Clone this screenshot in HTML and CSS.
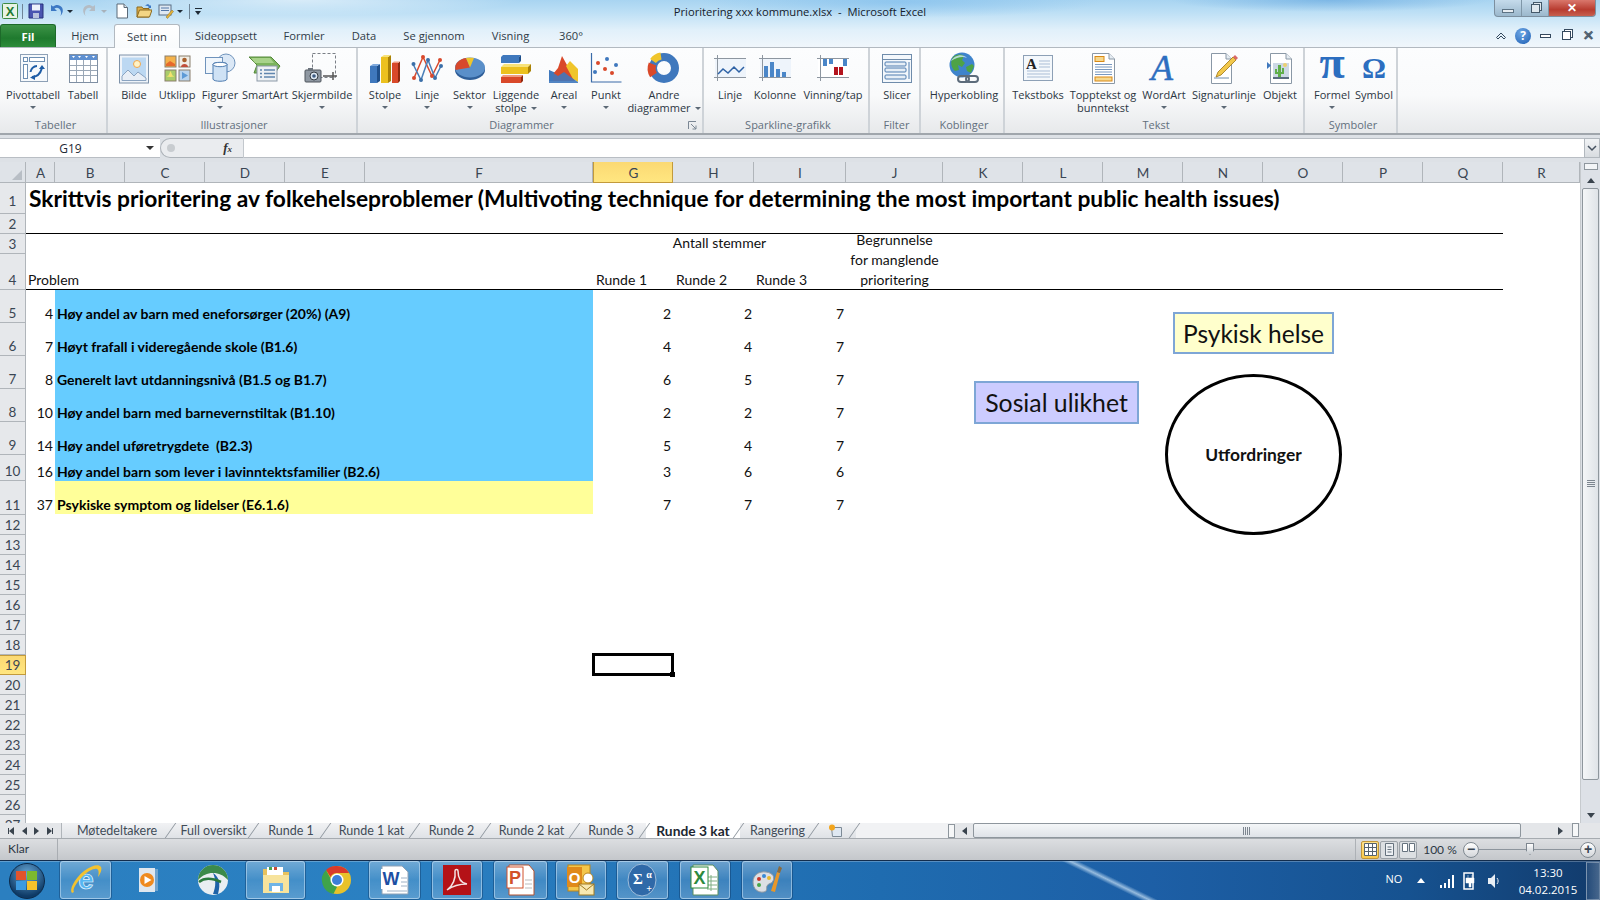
FILE: index.html
```html
<!DOCTYPE html>
<html lang="no">
<head>
<meta charset="utf-8">
<title>Prioritering xxx kommune.xlsx - Microsoft Excel</title>
<link rel="stylesheet" href="styles.css">
</head>
<body>
<div class="app">
<header class="chrome">
  <div class="titlebar">
    <div class="qat">
      <svg class="q w16" viewBox="0 0 16 16"><rect x=".5" y=".5" width="15" height="15" rx="1" fill="#e8f3e4" stroke="#3d8a45"/><text x="8" y="13" class="xl">X</text></svg>
      <span class="qsep"></span>
      <svg class="q w16 s1" viewBox="0 0 16 16"><path d="M1 1h14v14H1z" fill="#4a55b0" stroke="#27307a"/><rect x="4" y="1.500" width="8" height="6" fill="#eef2fb"/><rect x="5" y="10" width="6" height="5" fill="#b9c3dd"/></svg>
      <svg class="q w16 s2" viewBox="0 0 16 16"><path d="M3 2v6h6L6.500 5.500C9 4 12 5 13 9c.3 1.500 0 3-1 4 3-2 3.500-6 2-8.500C12 1.500 8 1 5 3.500z" fill="#3c78c4"/></svg>
      <i class="qa s3"></i>
      <svg class="q w16 s4" viewBox="0 0 16 16"><path d="M13 2v6H7l2.500-2.500C7 4 4 5 3 9c-.3 1.500 0 3 1 4-3-2-3.500-6-2-8.500C4 1.500 8 1 11 3.500z" fill="#b4bcc4"/></svg>
      <i class="qa s5 dim"></i>
      <svg class="q w16 s6" viewBox="0 0 16 16"><path d="M3 1h7l3.500 3.500V15H3z" fill="#fff" stroke="#5b6a78"/><path d="M10 1v3.500h3.500" fill="#dfe6ec" stroke="#5b6a78"/></svg>
      <svg class="q w16 s7" viewBox="0 0 16 16"><path d="M1 4h5l1 1.500h6V14H1z" fill="#dcae4b" stroke="#8d6a1f"/><path d="M3.500 7H16l-2.500 7H1z" fill="#f4d684" stroke="#8d6a1f"/><path d="M9 3c2-2.500 4-2 5 0l1-1v3h-3l1-1c-1-1-2.500-1.500-4-1z" fill="#3c78c4"/></svg>
      <svg class="q w16 s8" viewBox="0 0 16 16"><rect x="1" y="2" width="12" height="10" fill="#dfe8f2" stroke="#596d84"/><path d="M3 5h8M3 7.500h8" stroke="#5276a8"/><path d="M8 14l6-7 1.500 1.500-6 7z" fill="#e5b43a" stroke="#8d6a1f" stroke-width=".5"/></svg>
      <i class="qa s9"></i>
      <span class="qsep s10"></span>
      <span class="qc"></span>
    </div>
    <div class="doctitle">Prioritering xxx kommune.xlsx&nbsp; -&nbsp; Microsoft Excel</div>
    <div class="wctrl">
      <span class="wb"><i class="wmin"></i></span>
      <span class="wb"><i class="wres"></i></span>
      <span class="wb close"><b>✕</b></span>
    </div>
  </div>
  <nav class="tabs">
    <span class="tab fil">Fil</span>
    <span class="tab t58">Hjem</span>
    <span class="tab active">Sett inn</span>
    <span class="tab t92">Sideoppsett</span>
    <span class="tab t64">Formler</span>
    <span class="tab t56">Data</span>
    <span class="tab t84">Se gjennom</span>
    <span class="tab t69">Visning</span>
    <span class="tab t52">360°</span>
    <div class="helpbar">
      <svg class="hb1" width="12" height="10" viewBox="0 0 12 10"><path d="M1.500 6.500L6 2l4.500 4.500L9 8 6 5 3 8z" fill="none" stroke="#34495e"/></svg>
      <span class="help">?</span>
      <i class="hmin"></i>
      <i class="hres"></i>
      <b class="hx">✕</b>
    </div>
  </nav>
</header>

<section class="ribbon">
  <div class="group g108 pad5">
    <div class="btns">
      <div class="rb w56"><svg viewBox="0 0 32 32"><rect x="3.500" y="2.500" width="27" height="27" fill="#f6f9fc" stroke="#8da0b6"/><rect x="6.500" y="5.500" width="4" height="4" fill="#fff" stroke="#6e8fb3"/><rect x="12.500" y="5.500" width="15" height="4" fill="#fff" stroke="#6e8fb3"/><rect x="6.500" y="12.500" width="4" height="14" fill="#fff" stroke="#6e8fb3"/><path d="M15 25c4 0 8-2 10-9M13.500 20c.3-3 3-6 6.500-6" fill="none" stroke="#1d5ca6" stroke-width="2"/><path d="M22 17l3-4 3 4zM18 23v5l-5-2.500z" fill="#1d5ca6"/></svg><span>Pivottabell</span><i class="dd"></i></div>
      <div class="rb w44"><svg viewBox="0 0 32 32"><rect x="2.500" y="2.500" width="28" height="28" fill="#fff" stroke="#7f8fa3"/><rect x="3" y="3" width="27" height="5" fill="#5d8fd1"/><path d="M9.500 8v22M16.500 8v22M23.500 8v22M3 13.500h27M3 18.500h27M3 23.500h27" stroke="#9aa7b6"/><path d="M5 4l1.500 2L8 4zM11 4l1.500 2L14 4zM18 4l1.500 2L21 4zM25 4l1.500 2L28 4z" fill="#fff"/></svg><span>Tabell</span></div>
    </div>
    <div class="glabel">Tabeller</div>
  </div>
  <div class="group g250">
    <div class="btns">
      <div class="rb w44"><svg viewBox="0 0 32 32"><rect x="1.500" y="3" width="29" height="28" fill="#eef3f9" stroke="#7e92a9"/><rect x="4" y="5.500" width="24" height="23" fill="#bcd8f2"/><circle cx="19" cy="12" r="3.500" fill="#fff2c4" stroke="#efa64c"/><path d="M4 28.500V24l6-6 6 6 4-4 8 6v2.500z" fill="#e8eef6" stroke="#8aa3c0"/></svg><span>Bilde</span></div>
      <div class="rb w42"><svg viewBox="0 0 32 32"><rect x="4" y="4" width="11" height="11" fill="#f4b24b" stroke="#8a7f6c"/><path d="M5 12l4-3 5 3v2H5z" fill="#e66a2c"/><rect x="18" y="4" width="11" height="11" fill="#f1eee6" stroke="#8a7f6c"/><circle cx="23.500" cy="8" r="2.300" fill="#a8602c"/><path d="M20 15c0-4 7-4 7 0z" fill="#c04e3a"/><rect x="4" y="18" width="11" height="11" fill="#a9cc6b" stroke="#8a7f6c"/><path d="M9.500 19l2 4.500 2 1-4 .5-4-.5 2-1z" fill="#f4e36c"/><rect x="18" y="18" width="11" height="11" fill="#b9d4ee" stroke="#8a7f6c"/><path d="M21 20l6 3.500-6 3.500z" fill="#5d9ad6"/></svg><span>Utklipp</span></div>
      <div class="rb w44"><svg viewBox="0 0 32 32"><circle cx="22" cy="11" r="9" fill="#dbe8f6" stroke="#6f93bc"/><rect x="1.500" y="5.500" width="17" height="16" fill="#f0f6fc" stroke="#6f93bc"/><path d="M9 12c0-2 14-2 14 0v15c0 3-14 3-14 0z" fill="#cfe2f5" stroke="#4f7cb0"/><ellipse cx="16" cy="12.500" rx="7" ry="2.200" fill="#fff" stroke="#4f7cb0"/></svg><span>Figurer</span><i class="dd"></i></div>
      <div class="rb w46"><svg viewBox="0 0 32 32"><path d="M0 5h22l9 9-5 7H5l3-8z" fill="#7cb45c" stroke="#54883a"/><path d="M2 6h19l4 5H6z" fill="#a8d38a"/><rect x="8" y="14" width="20" height="15" fill="#eef1f4" stroke="#8b99a7"/><path d="M11 18h2M15 18h11M11 21.500h2M15 21.500h11M11 25h2M15 25h11" stroke="#6186ae" stroke-width="1.300"/></svg><span>SmartArt</span></div>
      <div class="rb w68"><svg viewBox="0 0 36 32" class="w36i"><rect x="8.500" y="1.500" width="23" height="24" fill="none" stroke="#7a7f86" stroke-dasharray="3 2"/><rect x="1" y="18" width="16" height="12" rx="1" fill="#8f98a2" stroke="#4e555c"/><rect x="4" y="16" width="5" height="3" fill="#6b737c"/><circle cx="10" cy="24" r="4" fill="#dbe7f2" stroke="#353b42"/><circle cx="10" cy="24" r="1.800" fill="#3d5a80"/><path d="M19 24h9M29 20v8M25 24h8" stroke="#555" stroke-width="1.500"/></svg><span>Skjermbilde</span><i class="dd"></i></div>
    </div>
    <div class="glabel">Illustrasjoner</div>
  </div>
  <div class="group g346 pad5">
    <div class="btns">
      <div class="rb w44"><svg viewBox="0 0 32 32"><path d="M1 14h7v17H1z" fill="#3f78bd"/><path d="M8 14l3-2v17l-3 2z" fill="#1f4f8a"/><path d="M1 14l3-2h7l-3 2z" fill="#7fa9dc"/><path d="M12 5h7v26h-7z" fill="#ecc11f"/><path d="M19 5l3-2v26l-3 2z" fill="#a98207"/><path d="M12 5l3-2h7l-3 2z" fill="#f8e27a"/><path d="M23 11h6v20h-6z" fill="#d9492a"/><path d="M29 11l2-1.500V29l-2 2z" fill="#91290f"/><path d="M23 11l2-1.500h6L29 11z" fill="#f09b80"/></svg><span>Stolpe</span><i class="dd"></i></div>
      <div class="rb w40"><svg viewBox="0 0 32 32"><path d="M3 26l9-21 9 19 8-16" fill="none" stroke="#d8492c" stroke-width="1.500"/><path d="M2 12l8 16 7-20 7 18 6-12" fill="none" stroke="#4a7fb8" stroke-width="1.500"/><g fill="#d8492c"><circle cx="3" cy="26" r="2"/><circle cx="12" cy="5" r="2"/><circle cx="21" cy="24" r="2"/><circle cx="29" cy="8" r="2"/></g><g fill="#3b6fa8"><circle cx="2.500" cy="12" r="2"/><circle cx="10" cy="28" r="2"/><circle cx="17" cy="8" r="2"/><circle cx="24" cy="26" r="2"/><circle cx="30" cy="14" r="2"/></g></svg><span>Linje</span><i class="dd"></i></div>
      <div class="rb w45"><svg viewBox="0 0 32 32"><ellipse cx="16" cy="18" rx="15" ry="10" fill="#2f5f99"/><ellipse cx="16" cy="15.500" rx="15" ry="10" fill="#5a8fc9"/><path d="M16 15.500L1.500 18C0 12 5 7 12 6z" fill="#d8492c"/><path d="M16 15.500L12 6c2-.500 6-.500 8 0z" fill="#f0c52b"/></svg><span>Sektor</span><i class="dd"></i></div>
      <div class="rb w48"><svg viewBox="0 0 32 32"><path d="M1 5h18l-2 2H1zM3 3h18l-2 2H1z" fill="#3f78bd"/><path d="M1 5h18v6H1z" fill="#3f78bd"/><path d="M19 5l2-2v6l-2 2z" fill="#1f4f8a"/><path d="M1 15h27v7H1z" fill="#ecc11f"/><path d="M1 15l3-3h27l-3 3z" fill="#f8e27a"/><path d="M28 15l3-3v7l-3 3z" fill="#a98207"/><path d="M1 25h20v6H1z" fill="#d9492a"/><path d="M1 25l2-2h20l-2 2z" fill="#f09b80"/><path d="M21 25l2-2v6l-2 2z" fill="#91290f"/></svg><span>Liggende<br>stolpe<i class="dd inl"></i></span></div>
      <div class="rb w48"><svg viewBox="0 0 32 32"><path d="M1 18l7 3 4-6 6 9 8 5H1z" fill="#3f78bd"/><path d="M5 22l5-6 4-12 5 9 4 8 4 8H5z" fill="#d9492a"/><path d="M18 14l4-5 8 8v13l-5-3z" fill="#f0c52b"/><path d="M1 18l9 6 6-4 5 4 9 6v1H1z" fill="#3f78bd" opacity=".9"/></svg><span>Areal</span><i class="dd"></i></div>
      <div class="rb w36"><svg viewBox="0 0 32 32"><path d="M1.500 1v29h30" fill="none" stroke="#3a6ba8" stroke-width="1.200"/><g fill="#d9492a"><circle cx="8" cy="11" r="2"/><circle cx="15" cy="17" r="2"/><circle cx="22" cy="21" r="2"/></g><g fill="#3f78bd"><circle cx="5" cy="20" r="2"/><circle cx="17" cy="7" r="2"/><circle cx="26" cy="13" r="2"/></g></svg><span>Punkt</span><i class="dd"></i></div>
      <div class="rb w80"><svg viewBox="0 0 32 32"><circle cx="16" cy="16" r="11" fill="none" stroke="#3f78bd" stroke-width="8"/><path d="M5.500 23A12 12 0 0 1 4.500 12" fill="none" stroke="#d9492a" stroke-width="8"/><path d="M5 9A12 12 0 0 1 13 4" fill="none" stroke="#f0c52b" stroke-width="7"/></svg><span>Andre<br>diagrammer<i class="dd inl"></i></span></div>
    </div>
    <div class="glabel lnch">Diagrammer</div>
    <svg class="launch" width="9" height="9" viewBox="0 0 9 9"><path d="M.5 8V.5H8M3 3l5 5M4.500 8H8V4.500" fill="none" stroke="#7b8794"/></svg>
  </div>
  <div class="group g166">
    <div class="btns">
      <div class="rb w44"><svg viewBox="0 0 32 32"><rect x="1" y="6" width="31" height="20" fill="#eef4fb"/><path d="M0 6.500h32M0 25.500h32M3.500 3v26" stroke="#8d96a0"/><path d="M4 22l5-5 5 4 6-6 5 5 5-5" fill="none" stroke="#2e62a6" stroke-width="1.500"/></svg><span>Linje</span></div>
      <div class="rb w46"><svg viewBox="0 0 32 32"><rect x="1" y="6" width="31" height="20" fill="#eef4fb"/><path d="M0 6.500h32M0 25.500h32M3.500 3v26" stroke="#8d96a0"/><path d="M5 25V14h4v11zM11 25V10h4v15zM17 25V17h4v8zM23 25V20h4v5z" fill="#4a86c8"/></svg><span>Kolonne</span></div>
      <div class="rb w70"><svg viewBox="0 0 32 32"><rect x="1" y="6" width="31" height="20" fill="#fff"/><path d="M0 6.500h32M0 25.500h32M3.500 3v26" stroke="#8d96a0"/><path d="M6 7h4v7H6zM12 7h4v5h-4zM26 7h4v7h-4z" fill="#4a86c8"/><path d="M17 15h4v8h-4zM22 15h4v8h-4z" fill="#b4141e"/></svg><span>Vinning/tap</span></div>
    </div>
    <div class="glabel">Sparkline-grafikk</div>
  </div>
  <div class="group g51">
    <div class="btns">
      <div class="rb w46"><svg viewBox="0 0 32 32"><rect x="1.500" y="2.500" width="29" height="28" fill="#f4f8fc" stroke="#6f8cab"/><path d="M1.500 7.500h29" stroke="#6f8cab"/><g fill="#e6eef6" stroke="#4f7cb0"><rect x="4" y="10" width="21" height="4" rx="1"/><rect x="4" y="16" width="21" height="4" rx="1"/><rect x="4" y="23" width="21" height="4" rx="1"/></g><path d="M28 10v17" stroke="#4f7cb0"/></svg><span>Slicer</span></div>
    </div>
    <div class="glabel">Filter</div>
  </div>
  <div class="group g84">
    <div class="btns">
      <div class="rb w78"><svg viewBox="0 0 32 32"><circle cx="14" cy="13" r="12.500" fill="#3f84cc"/><path d="M5 5c4-3 8-3 11-1l-2 4 3 3-3 4-4-2 1 5-4 1C3 16 2 9 5 5zM18 15l6-3 2 2-3 7-4-2z" fill="#4ea346"/><path d="M3 9c3-6 12-8 16-3-4-2-10-1-16 3z" fill="#cfe6fb" opacity=".8"/><g fill="none" stroke="#5d6c7b" stroke-width="2"><rect x="10" y="24" width="11" height="6" rx="3"/><rect x="18" y="24" width="12" height="6" rx="3"/></g></svg><span>Hyperkobling</span></div>
    </div>
    <div class="glabel">Koblinger</div>
  </div>
  <div class="group g300">
    <div class="btns">
      <div class="rb w58"><svg viewBox="0 0 32 32"><rect x="1.500" y="3.500" width="29" height="25" fill="#f4f8fc" stroke="#8da0b6"/><path d="M17 9h11M17 12h11M17 15h11M5 19h23M5 22h23M5 25h23" stroke="#a9bdd6"/><text x="9.500" y="17" class="ta">A</text></svg><span>Tekstboks</span></div>
      <div class="rb w72"><svg viewBox="0 0 32 32"><path d="M5.500 1.500H22l5.500 5.500v24.500h-22z" fill="#fff" stroke="#8a98a6"/><path d="M22 1.500V7h5.500" fill="#e6edf3" stroke="#8a98a6"/><rect x="8" y="4.500" width="9" height="5" fill="#f6d88e" stroke="#d98a17"/><path d="M8 12.500h17M8 15h17M8 17.500h17M8 20h17M8 22.500h17" stroke="#7898c0"/><rect x="8" y="25" width="17" height="4" fill="#f6d88e" stroke="#d98a17"/></svg><span>Topptekst og<br>bunntekst</span></div>
      <div class="rb w50"><svg viewBox="0 0 32 32"><text x="14" y="28" class="wa">A</text></svg><span>WordArt</span><i class="dd"></i></div>
      <div class="rb w70"><svg viewBox="0 0 32 32"><path d="M3.500 1.500H18l5.500 5.500v24.500h-20z" fill="#fff" stroke="#8a98a6"/><path d="M18 1.500V7h5.500" fill="#e6edf3" stroke="#8a98a6"/><path d="M6 26h15" stroke="#6f8cab"/><path d="M8 25l2-5L25 5l3 3L13 23z" fill="#f2c84b" stroke="#9c7412" stroke-width=".8"/><path d="M25 5l2-2 3 3-2 2z" fill="#d96868"/></svg><span>Signaturlinje</span><i class="dd"></i></div>
      <div class="rb w42"><svg viewBox="0 0 32 32"><path d="M6.500 1.500H22l5.500 5.500v24.500h-21z" fill="#fff" stroke="#8a98a6"/><path d="M22 1.500V7h5.500" fill="#e6edf3" stroke="#8a98a6"/><rect x="9" y="11" width="16" height="15" fill="#cdd9e6"/><path d="M14 27V13h3v14zM11 21v-4h2v3h1v2h-3zM20 19v-3h-2v4h-1v2h3z" fill="#5fae4a"/><circle cx="21" cy="13" r="2" fill="#ecd070"/><path d="M9 26h16" stroke="#5a6c80" stroke-width="2"/><path d="M3 10l4 3.500L3 17z" fill="#3f78bd"/></svg><span>Objekt</span></div>
    </div>
    <div class="glabel">Tekst</div>
  </div>
  <div class="group g93 pad5">
    <div class="btns">
      <div class="rb w44"><svg viewBox="0 0 32 32"><text x="16" y="26" class="sym pi">π</text></svg><span>Formel</span><i class="dd"></i></div>
      <div class="rb w40"><svg viewBox="0 0 32 32"><text x="16" y="26" class="sym om">Ω</text></svg><span>Symbol</span></div>
    </div>
    <div class="glabel">Symboler</div>
  </div>
</section>

<section class="formula">
  <div class="namebox"><span>G19</span><i class="nbarrow"></i></div>
  <div class="fxzone"><span class="fxdot"></span><em>f<sub>x</sub></em></div>
  <div class="finput"></div>
  <div class="fdrop"><svg width="10" height="7" viewBox="0 0 10 7"><path d="M1 1l4 4 4-4" fill="none" stroke="#465260" stroke-width="1.500"/></svg></div>
</section>

<section class="sheet">
  <div class="grid">
    <div class="row colhead">
      <div class="corner"><i></i></div>
      <div class="ch">A</div><div class="ch">B</div><div class="ch">C</div><div class="ch">D</div><div class="ch">E</div><div class="ch">F</div>
      <div class="ch sel">G</div><div class="ch">H</div><div class="ch">I</div><div class="ch">J</div><div class="ch">K</div><div class="ch">L</div>
      <div class="ch">M</div><div class="ch">N</div><div class="ch">O</div><div class="ch">P</div><div class="ch">Q</div><div class="ch">R</div>
    </div>
    <div class="row h31"><div class="rh lift">1</div><div class="cell title">Skrittvis prioritering av folkehelseproblemer (Multivoting technique for determining the most important public health issues)</div></div>
    <div class="row h20"><div class="rh">2</div></div>
    <div class="row h20"><div class="rh">3</div><div class="rule top"></div><div class="cell span-gi center">Antall stemmer</div></div>
    <div class="row h36"><div class="rh">4</div><div class="rule bottom"></div><div class="cell ca">Problem</div><div class="cell cg">Runde 1</div><div class="cell ch-h">Runde 2</div><div class="cell ci">Runde 3</div><div class="cell cj center">Begrunnelse<br>for manglende<br>prioritering</div></div>
    <div class="row h33"><div class="rh">5</div><div class="cell ca num">4</div><div class="cell fill blue bold">Høy andel av barn med eneforsørger (20%) (A9)</div><div class="cell cg num">2</div><div class="cell ch-h num">2</div><div class="cell ci num">7</div></div>
    <div class="row h33"><div class="rh">6</div><div class="cell ca num">7</div><div class="cell fill blue bold">Høyt frafall i videregående skole (B1.6)</div><div class="cell cg num">4</div><div class="cell ch-h num">4</div><div class="cell ci num">7</div></div>
    <div class="row h33"><div class="rh">7</div><div class="cell ca num">8</div><div class="cell fill blue bold">Generelt lavt utdanningsnivå (B1.5 og B1.7)</div><div class="cell cg num">6</div><div class="cell ch-h num">5</div><div class="cell ci num">7</div></div>
    <div class="row h33"><div class="rh">8</div><div class="cell ca num">10</div><div class="cell fill blue bold">Høy andel barn med barnevernstiltak (B1.10)</div><div class="cell cg num">2</div><div class="cell ch-h num">2</div><div class="cell ci num">7</div></div>
    <div class="row h33"><div class="rh">9</div><div class="cell ca num">14</div><div class="cell fill blue bold">Høy andel uføretrygdete&nbsp; (B2.3)</div><div class="cell cg num">5</div><div class="cell ch-h num">4</div><div class="cell ci num">7</div></div>
    <div class="row h26"><div class="rh">10</div><div class="cell ca num">16</div><div class="cell fill blue bold">Høy andel barn som lever i lavinntektsfamilier (B2.6)</div><div class="cell cg num">3</div><div class="cell ch-h num">6</div><div class="cell ci num">6</div></div>
    <div class="row h34"><div class="rh">11</div><div class="cell ca num">37</div><div class="cell fill yellow bold">Psykiske symptom og lidelser (E6.1.6)</div><div class="cell cg num">7</div><div class="cell ch-h num">7</div><div class="cell ci num">7</div></div>
    <div class="row h20"><div class="rh">12</div></div>
    <div class="row h20"><div class="rh">13</div></div>
    <div class="row h20"><div class="rh">14</div></div>
    <div class="row h20"><div class="rh">15</div></div>
    <div class="row h20"><div class="rh">16</div></div>
    <div class="row h20"><div class="rh">17</div></div>
    <div class="row h20"><div class="rh">18</div></div>
    <div class="row h20"><div class="rh sel">19</div></div>
    <div class="row h20"><div class="rh">20</div></div>
    <div class="row h20"><div class="rh">21</div></div>
    <div class="row h20"><div class="rh">22</div></div>
    <div class="row h20"><div class="rh">23</div></div>
    <div class="row h20"><div class="rh">24</div></div>
    <div class="row h20"><div class="rh">25</div></div>
    <div class="row h20"><div class="rh">26</div></div>
    <div class="row h20"><div class="rh">27</div></div>

    <div class="cursor"><i></i></div>
    <div class="shape psy">Psykisk helse</div>
    <div class="shape sos">Sosial ulikhet</div>
    <div class="shape circ">Utfordringer</div>
  </div>
  <aside class="vscroll">
    <div class="vsplit"></div>
    <div class="vbtn"><i class="up"></i></div>
    <div class="vthumb"><i></i></div>
    <div class="vbtn"><i class="down"></i></div>
  </aside>
</section>

<section class="sheetbar">
  <div class="nav"><i class="nl bar"></i><i class="nl"></i><i class="nr"></i><i class="nr bar"></i></div>
  <div class="stab w110">Møtedeltakere</div>
  <div class="stab w83">Full oversikt</div>
  <div class="stab w72s">Runde 1</div>
  <div class="stab w89">Runde 1 kat</div>
  <div class="stab w71">Runde 2</div>
  <div class="stab w89">Runde 2 kat</div>
  <div class="stab w70s">Runde 3</div>
  <div class="stab w94 cur">Runde 3 kat</div>
  <div class="stab w75">Rangering</div>
  <div class="stab w41"><svg width="16" height="13" viewBox="0 0 16 13"><path d="M3.500 3.500h10v9h-9z" fill="#dfe8f2" stroke="#7d8a96"/><circle cx="4" cy="3.500" r="3" fill="#f2a51e"/></svg></div>
  <div class="splitzone"><i class="splith"></i></div>
  <div class="hbtn"><i class="lt"></i></div>
  <div class="hthumb"><i></i></div>
  <div class="hbtn rgt"><i class="rt"></i></div>
  <i class="splith end"></i>
</section>

<footer class="status">
  <span class="klar">Klar</span>
  <div class="views">
    <span class="vw on"><svg width="13" height="13" viewBox="0 0 13 13"><path d="M.5.5h12v12H.5zM.5 4.500h12M.5 8.500h12M4.500.5v12M8.500.5v12" fill="#fff" stroke="#56636f"/></svg></span>
    <span class="vw"><svg width="13" height="13" viewBox="0 0 13 13"><path d="M2.500.5h8v12h-8z" fill="#eef1f4" stroke="#66727e"/><path d="M4.500 4h4M4.500 6.500h4M4.500 9h4" stroke="#66727e"/></svg></span>
    <span class="vw"><svg width="13" height="13" viewBox="0 0 13 13"><path d="M.5.5h5v8h-5zM7.500.5h5v8h-5z" fill="#fff" stroke="#66727e"/></svg></span>
  </div>
  <span class="zoompct">100 %</span>
  <div class="zoom">
    <span class="zb">−</span>
    <div class="ztrack"><i class="zthumb"></i></div>
    <span class="zb">+</span>
  </div>
</footer>

<footer class="taskbar">
  <div class="orbwrap"><span class="orb"><i class="f1"></i><i class="f2"></i><i class="f3"></i><i class="f4"></i></span></div>
  <div class="tb on w51"><svg viewBox="0 0 32 32"><text x="16" y="25" class="ie">e</text><path d="M2 29C-1 26 4 15 14 7 22 1 29 0 31 3c1 2 0 6-3 10 1-4 1-7-1-8-3-1-9 2-14 7C7 18 2 25 4 28z" fill="#f2c230"/></svg></div>
  <div class="tb w74"><svg viewBox="-3 0 32 32"><rect x="7" y="5" width="16" height="22" fill="#8bb3d6" opacity=".7"/><rect x="4" y="4" width="16" height="24" fill="#dfe7ef"/><circle cx="12" cy="16" r="7" fill="#ef8a1e"/><path d="M9.500 12l7 4-7 4z" fill="#fff"/></svg></div>
  <div class="tb w56"><svg viewBox="0 0 32 32"><circle cx="16" cy="16" r="15" fill="#e9eef2"/><path d="M1 16a15 15 0 0 1 30 0c-5-5-9-7-15-7S6 11 1 16z" fill="#3b8a4b"/><path d="M16 9c6 4 8 10 5 21h-5c3-8 3-14 0-21z" fill="#1e63a8"/><path d="M2 18c6-5 13-4 22 0" fill="none" stroke="#2a7a3e" stroke-width="2.500"/></svg></div>
  <div class="tb on w59 ml5"><svg viewBox="0 0 32 32"><path d="M3 5h11l2 3h13v21H3z" fill="#e8c25d"/><rect x="7" y="3" width="16" height="8" fill="#fff"/><rect x="9" y="3" width="3" height="3" fill="#4aa34a"/><rect x="14" y="3" width="3" height="3" fill="#c94a3a"/><path d="M3 11h26v18H3z" fill="#f7e39c"/><rect x="9" y="19" width="14" height="8" fill="#6fb4e6"/><rect x="12" y="22" width="8" height="6" fill="#fff"/></svg></div>
  <div class="tb w64"><svg viewBox="0 0 32 32"><circle cx="16" cy="16" r="14" fill="#e8c22a"/><path d="M16 2a14 14 0 0 1 12.100 7H16a7 7 0 0 0-6.500 4L5 6a14 14 0 0 1 11-4z" fill="#d93a2b"/><path d="M5 6l6 11 5 6-3.500 6.700A14 14 0 0 1 5 6z" fill="#3fa34a"/><circle cx="16" cy="16" r="6.500" fill="#fff"/><circle cx="16" cy="16" r="5" fill="#3d7fd8"/></svg></div>
  <div class="tb on w51"><svg viewBox="0 0 32 32"><path d="M3 2h20l6 6v22H3z" fill="#fff" stroke="#8fa2b6"/><path d="M22 14h6M22 18h6M22 22h6M8 27h20" stroke="#9fb2c6"/><rect x="2" y="5" width="19" height="20" fill="#fff"/><text x="12" y="21" class="wd wblue">W</text></svg></div>
  <div class="tb on w50 ml12"><svg viewBox="0 0 32 32"><rect x="2" y="1" width="28" height="30" fill="#b41217"/><path d="M6 26c6-4 9-12 8-19 0-2 3-2 3 0 0 8 3 12 9 13-7 0-13 1-20 6z" fill="none" stroke="#f4e3e3" stroke-width="1.500"/></svg></div>
  <div class="tb on w53 ml12"><svg viewBox="0 0 32 32"><path d="M4 1h20l5 6v24H4z" fill="#fff" stroke="#b45330"/><rect x="2" y="3" width="16" height="21" fill="#fff" stroke="#d2512a"/><text x="10" y="20" class="wd wred">P</text><path d="M20 16h7M20 20h7M20 24h7" stroke="#bbb"/></svg></div>
  <div class="tb on w50 ml9"><svg viewBox="0 0 32 32"><rect x="3" y="1" width="22" height="26" fill="#f4c64a" stroke="#b9851b"/><rect x="2" y="3" width="15" height="20" fill="#e08a1a"/><text x="9.500" y="19" class="wd">O</text><circle cx="23" cy="14" r="5" fill="#fff" stroke="#b9851b"/><rect x="14" y="20" width="15" height="11" fill="#f8e9b2" stroke="#a17b22"/><path d="M14 20l7.500 6 7.500-6" fill="none" stroke="#a17b22"/></svg></div>
  <div class="tb on w51 ml11"><svg viewBox="0 0 32 32"><ellipse cx="15" cy="16" rx="14" ry="16" fill="#2f69a8" stroke="#9fbedb"/><text x="11" y="20" class="mth">Σ</text><text x="22" y="14" class="mth sm">α</text><text x="22" y="28" class="mth sm">+</text></svg></div>
  <div class="tb on w50 ml12"><svg viewBox="0 0 32 32"><path d="M4 1h20l5 6v24H4z" fill="#fff" stroke="#5b8f60"/><path d="M18 13h10M18 17h10M18 21h10M18 25h10M22 11v16" stroke="#7fae83"/><rect x="2" y="3" width="17" height="21" fill="#fff" stroke="#2c8a3e"/><text x="10.500" y="20" class="wd wgreen">X</text></svg></div>
  <div class="tb on w50 ml12"><svg viewBox="0 0 32 32"><path d="M2 18c0-7 6-11 13-10 7 1 9 5 7 9-1 3-5 2-6 5-1 2 1 5-3 6C7 29 2 25 2 18z" fill="#dcdfe4" stroke="#8e97a1"/><circle cx="8" cy="15" r="2" fill="#c9342a"/><circle cx="13" cy="12" r="2" fill="#3a8ad6"/><circle cx="18" cy="14" r="2" fill="#e8b92d"/><circle cx="8" cy="21" r="2" fill="#47a64a"/><path d="M20 27L26 8l3 1-5 19z" fill="#e7972b"/><path d="M26 8l2-6 3 2-2 5z" fill="#8a6b3f"/></svg></div>
  <div class="tray">
    <span class="lang">NO</span>
    <i class="trayup"></i>
    <svg class="tr1" width="16" height="14" viewBox="0 0 16 14"><path d="M1 11h2v3H1zM5 9h2v5H5zM9 5h2v9H9zM13 1h2v13h-2z" fill="#fff"/></svg>
    <svg class="tr2" width="14" height="18" viewBox="0 0 14 18"><rect x="1" y="1" width="9" height="16" fill="none" stroke="#fff" stroke-width="1.500"/><path d="M5 3v3M9 3v3M3 6h8v5H8v4H6v-4H3z" fill="#fff" stroke="#fff" stroke-width=".5"/></svg>
    <svg class="tr3" width="14" height="16" viewBox="0 0 14 16"><path d="M1 5h3l4-4v14l-4-4H1z" fill="#e8eef5"/><path d="M10 5c1.500 2 1.500 4 0 6" fill="none" stroke="#e8eef5"/></svg>
    <div class="clock"><span>13:30</span><span>04.02.2015</span></div>
    <span class="showdesk"></span>
  </div>
</footer>
</div>
</body>
</html>
```
FILE: styles.css
```css
* { box-sizing: border-box; }
html, body { margin: 0; padding: 0; width: 1600px; height: 900px; overflow: hidden; background: #fff; }
body { font-family: "Open Sans", "Liberation Sans", sans-serif; font-size: 11px; color: #2c3744; }
.app { width: 1600px; height: 900px; display: flex; flex-direction: column; overflow: hidden; }

/* Title bar and tab strip */
.chrome { height: 47px; flex: none; background:
  radial-gradient(ellipse 220px 16px at 300px 0, rgba(255,255,255,.55), transparent),
  radial-gradient(ellipse 160px 12px at 1330px 0, rgba(90,160,220,.55), transparent),
  radial-gradient(ellipse 200px 16px at 900px 2px, rgba(120,185,235,.55), transparent),
  linear-gradient(#a8d4f1 0, #bcdff5 12px, #e1f0fa 30px, #f0f6fb 47px); }
.titlebar { height: 24px; display: flex; position: relative; }
.qat { width: 210px; display: flex; align-items: center; padding-left: 2px; height: 22px; }
.q.w16 { width: 16px; height: 16px; flex: none; }
.xl { font: bold 13px "Liberation Sans", sans-serif; fill: #1f7a33; text-anchor: middle; }
.qsep { width: 1px; height: 15px; background: #6f8496; margin: 0 5px 0 4px; flex: none; }
.s2 { margin-left: 4px; }
.qa { width: 0; height: 0; border: 3px solid transparent; border-top: 3px solid #1e2a36; border-bottom: 0; margin-left: 3px; flex: none; }
.qa.dim { border-top-color: #a8b2bb; }
.s4 { margin-left: 9px; }
.s6 { margin-left: 7px; }
.s7 { margin-left: 6px; }
.s8 { margin-left: 6px; }
.s10 { margin: 0 5px 0 6px; }
.qc { width: 7px; height: 6px; border-top: 1px solid #1e2a36; position: relative; flex: none; }
.qc::after { content: ""; position: absolute; top: 2px; left: 0; border: 3.500px solid transparent; border-top: 4px solid #1e2a36; border-bottom: 0; }
.doctitle { flex: 1; text-align: center; font-size: 11.200px; line-height: 24px; color: #15202b; margin-left: -210px; margin-right: -106px; white-space: nowrap; }
.wctrl { display: flex; width: 102px; height: 17px; margin-right: 4px; flex: none; border: 1px solid #7c8f9f; border-top: 0; border-radius: 0 0 4px 4px; overflow: hidden; background: linear-gradient(#c5dbeb, #9bb8cd); position: relative; }
.wb { width: 27px; display: flex; align-items: center; justify-content: center; border-right: 1px solid #7f97a8; }
.wmin { width: 12px; height: 4px; background: #e7edf2; border: 1px solid #5d7384; margin-top: 5px; }
.wres { width: 9px; height: 9px; border: 1px solid #44596a; box-shadow: 2px -2px 0 -1px #e0e8ee, 2px -2px 0 0 #44596a; background: #dfe8ee; margin-top: 1px; }
.wb.close { flex: 1; border: 0; background: linear-gradient(#d9776c, #b83c30 60%, #c7604f); color: #fff; font-size: 12px; line-height: 1; }
.tabs { height: 23px; display: flex; position: relative; align-items: stretch; }
.tab { display: flex; align-items: center; justify-content: center; flex: none; font-size: 11.200px; color: #2f3b47; }
.fil { width: 56px; background: linear-gradient(#3d9347, #1f7a2e 60%, #2c8c3a); color: #fff; border: 1px solid #1d6a2a; border-bottom: 0; border-radius: 3px 3px 0 0; font-weight: 700; }
.active { width: 66px; background: linear-gradient(#fff, #f9fbfc); border: 1px solid #b2b9c0; border-bottom: 0; border-radius: 3px 3px 0 0; height: 24px; z-index: 1; padding-bottom: 1px; }
.t52 { width: 52px; } .t56 { width: 56px; } .t58 { width: 58px; } .t64 { width: 64px; } .t69 { width: 69px; } .t84 { width: 84px; } .t92 { width: 92px; }
.helpbar { flex: 1; display: flex; align-items: center; justify-content: flex-end; padding-right: 5px; }
.help { width: 16px; height: 16px; border-radius: 50%; background: radial-gradient(circle at 40% 30%, #6da6e4, #1e5fb4); color: #fff; font: bold 12px/16px "Open Sans", sans-serif; text-align: center; margin: 0 9px 0 8px; }
.hmin { width: 11px; height: 4px; border: 1px solid #34495e; background: #fff; margin-right: 11px; }
.hres { width: 9px; height: 9px; border: 1px solid #34495e; box-shadow: 2px -2px 0 -1px #fff, 2px -2px 0 0 #34495e; background: #fff; margin-right: 12px; }
.hx { font-size: 13px; color: #fff; -webkit-text-stroke: .6px #4a5c6e; width: 11px; margin-right: 1px; line-height: 13px; }

/* Ribbon */
.ribbon { height: 88px; flex: none; display: flex; background: linear-gradient(#fcfdfe 0, #f9fafb 55%, #e7e9eb 100%); border-top: 1px solid #b2b9c0; border-bottom: 2px solid #a0a6ac; }
.group { flex: none; position: relative; border-right: 2px solid #ced3d8; display: flex; flex-direction: column; height: 85px; padding-left: 4px; }
.group.pad5 { padding-left: 5px; }
.g51 { width: 51px; } .g84 { width: 84px; } .g93 { width: 93px; } .g108 { width: 108px; } .g166 { width: 166px; } .g250 { width: 250px; } .g300 { width: 300px; } .g346 { width: 346px; }
.btns { flex: 1; display: flex; }
.rb { flex: none; display: flex; flex-direction: column; align-items: center; padding-top: 4px; }
.rb svg { width: 32px; height: 32px; flex: none; overflow: visible; }
.rb svg.w36i { width: 36px; }
.rb span { display: block; text-align: center; white-space: nowrap; font-size: 11px; line-height: 13px; margin-top: 4px; color: #2b3642; }
.w36 { width: 36px; } .w40 { width: 40px; } .w42 { width: 42px; } .w44 { width: 44px; } .w45 { width: 45px; } .w46 { width: 46px; } .w48 { width: 48px; } .w50 { width: 50px; } .w56 { width: 56px; } .w58 { width: 58px; } .w68 { width: 68px; } .w70 { width: 70px; } .w72 { width: 72px; } .w78 { width: 78px; } .w80 { width: 80px; }
.dd { display: block; width: 0; height: 0; border: 3px solid transparent; border-top: 3.500px solid #5c6875; border-bottom: 0; margin-top: 5px; }
.dd.inl { display: inline-block; margin: 0 0 2px 4px; }
.glabel { height: 18px; line-height: 19px; text-align: center; font-size: 11px; color: #626f7d; }
.glabel.lnch { padding-right: 22px; }
.launch { position: absolute; right: 5px; bottom: 3px; }
.ta { font: bold 15px "Liberation Serif", serif; fill: #222; text-anchor: middle; }
.wa { font: italic 400 36px "Liberation Serif", serif; fill: #2c6ec0; text-anchor: middle; stroke: #2c6ec0; stroke-width: .5px; }
.sym { font-family: "Liberation Serif", serif; fill: #2c6ec0; text-anchor: middle; font-weight: 700; }
.pi { font-size: 46px; }
.om { font-size: 30px; }

/* Formula bar */
.formula { height: 27px; flex: none; display: flex; background: #dde1e6; padding: 3px 0 4px; }
.namebox { width: 160px; height: 20px; background: #fff; display: flex; align-items: center; position: relative; border-top: 1px solid #b9bec4; border-bottom: 1px solid #b9bec4; }
.namebox span { width: 141px; text-align: center; font-size: 12px; color: #1f2a35; }
.nbarrow { border: 4px solid transparent; border-top: 4px solid #333; border-bottom: 0; margin-left: 5px; }
.fxzone { width: 84px; height: 20px; background: #eaecef; border: 1px solid #adb3b9; border-right-color: #c3c8cd; border-radius: 10px 0 0 10px; display: flex; align-items: center; justify-content: space-between; padding: 0 11px 0 6px; }
.fxdot { width: 8px; height: 8px; border-radius: 50%; background: #c8ccd0; }
.fxzone em { font: italic bold 13px "Liberation Serif", serif; color: #333; }
.fxzone sub { font-size: 9px; vertical-align: baseline; }
.finput { flex: 1; height: 20px; background: #fff; border-top: 1px solid #b9bec4; border-bottom: 1px solid #b9bec4; }
.fdrop { width: 16px; height: 20px; background: linear-gradient(#f1f3f5, #d8dce0); border: 1px solid #b2b8be; display: flex; align-items: center; justify-content: center; }

/* Sheet */
.sheet { height: 661px; flex: none; display: flex; overflow: hidden; }
.grid { width: 1580px; flex: none; position: relative; overflow: hidden; font-family: Lato, "Liberation Sans", sans-serif; font-size: 14px; color: #111; }
.row { display: grid; grid-template-columns: 26px 29px 70px 80px 80px 80px 228px 80px 81px 92px 97px 80px 80px 80px 80px 80px 80px 80px 77px; grid-template-rows: 100%; position: relative; }
.colhead { height: 21px; }
.h20 { height: 20px; } .h26 { height: 26px; } .h31 { height: 31px; } .h33 { height: 33px; } .h34 { height: 34px; } .h36 { height: 36px; }
.corner { background: #dfe3e8; border-right: 1px solid #b0b5ba; border-bottom: 1px solid #b0b5ba; position: relative; }
.corner i { position: absolute; right: 3px; bottom: 2px; border-style: solid; border-width: 0 0 10px 10px; border-color: transparent transparent #b8bec5 transparent; }
.ch { background: #dfe3e8; border-right: 1px solid #b0b5ba; border-bottom: 1px solid #b0b5ba; text-align: center; line-height: 23px; color: #3a4653; font-size: 13.500px; padding-left: 1px; overflow: hidden; }
.ch.sel { background: linear-gradient(#fbd973, #ffe680); border: 1px solid #c29a3c; border-top: 0; color: #3a4653; }
.rh { grid-column: 1; grid-row: 1; background: #e6e8eb; border-right: 1px solid #b0b5ba; border-bottom: 1px solid #b0b5ba; text-align: center; color: #3a4653; display: flex; align-items: flex-end; justify-content: center; line-height: 17px; font-size: 13.500px; }
.rh.lift { padding-bottom: 3px; }
.rh.sel { background: linear-gradient(#fbd973, #ffe680); border: 1px solid #c29a3c; border-left: 0; }
.cell { grid-row: 1; align-self: end; line-height: 20px; white-space: nowrap; z-index: 1; margin-bottom: -1px; }
.h20 .cell, .h36 .cell, .h34 .cell { margin-bottom: 0; }
.title { grid-column: 2 / -1; font-size: 22.750px; font-weight: 700; line-height: 30px; padding: 0 0 0 3px; color: #000; margin-bottom: 0; }
.ca { grid-column: 2; padding-left: 2px; }
.cg { grid-column: 8; padding-left: 3px; }
.ch-h { grid-column: 9; padding-left: 3px; }
.ci { grid-column: 10; padding-left: 2px; }
.cj { grid-column: 11; }
.center { text-align: center; }
.span-gi { grid-column: 8 / 11; margin-bottom: 1px !important; }
.num { text-align: right; padding: 0 2px 0 0; }
.fill { grid-column: 3 / 8; align-self: stretch; display: flex; align-items: flex-end; padding-left: 2px; line-height: 18px; margin-bottom: 0; }
.h34 .fill { margin-bottom: 1px; }
.blue { background: #66ccff; }
.yellow { background: #ffff99; }
.bold { font-weight: 700; color: #000; }
.rule { grid-row: 1; grid-column: 2 / 19; border: 0 solid #000; }
.rule.top { border-top-width: 1px; margin-top: -1px; }
.rule.bottom { border-bottom-width: 1px; }
.cursor { position: absolute; left: 592px; top: 491px; width: 82px; height: 23px; border: 3px solid #000; z-index: 3; }
.cursor i { position: absolute; right: -4px; bottom: -4px; width: 5px; height: 5px; background: #000; }
.shape { position: absolute; display: flex; align-items: center; justify-content: center; z-index: 2; color: #111; }
.psy { left: 1173px; top: 150px; width: 161px; height: 42px; background: #ffffcc; border: 2px solid #7ea6d6; font-size: 24.500px; }
.sos { left: 974px; top: 219px; width: 165px; height: 43px; background: #ccccff; border: 2px solid #7ea6d6; font-size: 24.800px; }
.circ { left: 1165px; top: 212px; width: 177px; height: 161px; border: 3px solid #000; border-radius: 50%; background: #fff; font-size: 17.400px; font-weight: 700; padding-bottom: 1px; }

/* Scrollbars */
.vscroll { width: 20px; flex: none; background: #dde1e7; display: flex; flex-direction: column; align-items: center; border-left: 1px solid #c6cace; }
.vsplit { width: 14px; height: 7px; margin-top: 1px; background: #f3f5f7; border: 1px solid #8e969d; }
.vbtn { height: 16px; width: 17px; display: flex; align-items: center; justify-content: center; margin-top: 2px; }
.vbtn:last-child { margin-top: 1px; height: 15px; }
.up { border: 4px solid transparent; border-bottom: 5px solid #39434d; border-top: 0; }
.down { border: 4px solid transparent; border-top: 5px solid #39434d; border-bottom: 0; }
.vthumb { flex: 1; width: 17px; background: linear-gradient(90deg, #f4f6f8, #dfe3e8); border: 1px solid #8e969d; border-radius: 2px; display: flex; align-items: center; justify-content: center; margin-bottom: 27px; }
.vthumb i { width: 8px; height: 8px; background: repeating-linear-gradient(#7d8690 0 1px, transparent 1px 2px); }
.sheetbar { height: 15px; flex: none; display: flex; background: #e4e6e9; font-size: 12px; align-items: stretch; position: relative; color: #3a4653; }
.nav { width: 62px; flex: none; display: flex; justify-content: space-around; align-items: center; padding: 0 5px; border-right: 1px solid #b0b5ba; }
.nl { border: 4px solid transparent; border-right: 5px solid #39434d; border-left: 0; }
.nr { border: 4px solid transparent; border-left: 5px solid #39434d; border-right: 0; }
.nl.bar { box-shadow: -2px 0 0 -1px #39434d; }
.nr.bar { box-shadow: 2px 0 0 -1px #39434d; }
.stab { flex: none; display: flex; align-items: center; justify-content: center; position: relative; white-space: nowrap; font-family: Lato, sans-serif; font-size: 12.500px; background: linear-gradient(#f1f2f4, #dfe2e6); line-height: 15px; color: #414c58; }
.stab::after { content: ""; position: absolute; right: 1px; top: 0; bottom: 0; width: 1px; background: #8d959d; transform: skewX(-35deg); z-index: 1; }
.w110 { width: 110px; } .w83 { width: 83px; } .w72s { width: 72px; } .w89 { width: 89px; } .w71 { width: 71px; } .w70s { width: 70px; } .w94 { width: 94px; } .w75 { width: 75px; } .w41 { width: 41px; }
.stab.cur { background: #fff; font-weight: 700; font-size: 13.800px; color: #1d2731; }
.splitzone { width: 99px; flex: none; display: flex; justify-content: flex-end; align-items: center; background: #f1f2f4; }
.splith { width: 7px; height: 14px; background: #f6f7f8; border: 1px solid #8e969d; flex: none; display: block; }
.hbtn { width: 18px; flex: none; display: flex; align-items: center; justify-content: center; }
.lt { border: 4px solid transparent; border-right: 5px solid #39434d; border-left: 0; }
.rt { border: 4px solid transparent; border-left: 5px solid #39434d; border-right: 0; }
.hthumb { width: 548px; flex: none; background: linear-gradient(#f4f6f8, #dfe3e8); border: 1px solid #8e969d; border-radius: 2px; display: flex; align-items: center; justify-content: center; }
.hthumb i { width: 8px; height: 8px; background: repeating-linear-gradient(90deg, #7d8690 0 1px, transparent 1px 2px); }
.hbtn.rgt { width: 51px; justify-content: flex-end; padding-right: 9px; }
.status { height: 22px; flex: none; display: flex; align-items: center; background: linear-gradient(#dcdee1, #c4c7cb); border-top: 1px solid #a6abb0; font-family: Lato, sans-serif; font-size: 12px; color: #2c3744; }
.klar { width: 58px; padding-left: 8px; height: 21px; line-height: 20px; border-right: 1px solid #a9adb2; flex: none; }
.views { margin-left: auto; display: flex; align-items: center; gap: 1px; padding-left: 5px; border-left: 1px solid #adb1b6; height: 21px; }
.vw { width: 18px; height: 18px; display: flex; align-items: center; justify-content: center; border: 1px solid #9ca2a8; background: #dcdfe2; border-radius: 2px; }
.vw.on { background: linear-gradient(#ffe38d, #fbc94b); border-color: #c2973a; }
.zoompct { width: 46px; text-align: center; flex: none; }
.zoom { width: 137px; flex: none; display: flex; align-items: center; padding-right: 4px; }
.zb { width: 16px; height: 16px; flex: none; border-radius: 50%; border: 1px solid #808991; background: linear-gradient(#fff, #d3d6da); text-align: center; font: bold 14px/13px "Liberation Sans", sans-serif; color: #3a4653; }
.ztrack { flex: 1; height: 1px; background: #8d959d; position: relative; }
.zthumb { position: absolute; left: 47px; top: -6px; width: 8px; height: 12px; background: linear-gradient(#fff, #c6cbd0); border: 1px solid #7d868f; clip-path: polygon(0 0, 100% 0, 100% 65%, 50% 100%, 0 65%); }

/* Task bar */
.taskbar { height: 40px; flex: none; display: flex; position: relative; background:
  linear-gradient(90deg, #2b7fc0 0, #2a80c2 25%, #1f6cb0 55%, #1d5fa6 72%, #165290 88%, #123b6c 100%); border-top: 1px solid #132d4d; box-shadow: inset 0 1px 0 rgba(255,255,255,.25); overflow: hidden; }
.taskbar::before { content: ""; position: absolute; left: 1114px; top: -4px; width: 18px; height: 60px; background: linear-gradient(90deg, transparent, rgba(200,225,245,.7), transparent); transform: skewX(64deg); }
.orbwrap { width: 60px; flex: none; display: flex; align-items: center; justify-content: center; padding-right: 7px; }
.orb { width: 36px; height: 36px; border-radius: 50%; background: radial-gradient(circle at 50% 30%, #67a7d6, #0e3a66 75%); border: 1px solid #0c2a4a; display: grid; grid-template-columns: 10px 10px; grid-template-rows: 9px 9px; gap: 1px; align-content: center; justify-content: center; }
.f1 { background: #e2542c; } .f2 { background: #7cb92f; } .f3 { background: #3c9ae0; } .f4 { background: #f6c22b; }
.tb { flex: none; display: flex; align-items: center; justify-content: center; height: 38px; position: relative; }
.tb svg { width: 32px; height: 32px; overflow: visible; }
.tb.on { background: linear-gradient(rgba(255,255,255,.32), rgba(255,255,255,.12) 50%, rgba(255,255,255,.22)); border: 1px solid rgba(200,225,245,.55); border-radius: 3px; box-shadow: 0 0 0 1px rgba(10,40,80,.35); }
.w74 { width: 74px; } .w51 { width: 51px; } .w53 { width: 53px; } .w59 { width: 59px; } .w64 { width: 64px; }
.ml5 { margin-left: 5px; } .ml9 { margin-left: 9px; } .ml11 { margin-left: 11px; } .ml12 { margin-left: 12px; }
.ie { font: bold 28px "Liberation Sans", sans-serif; fill: #55b6f2; stroke: #e8f6ff; stroke-width: .7px; text-anchor: middle; }
.wd { font: bold 15px "Liberation Sans", sans-serif; fill: #fff; text-anchor: middle; }
.wblue { fill: #1d4fa3; font-size: 18px; }
.wred { fill: #d2512a; font-size: 18px; }
.wgreen { fill: #2c8a3e; font-size: 18px; }
.mth { font: bold 15px "Liberation Serif", serif; fill: #fff; text-anchor: middle; }
.mth.sm { font-size: 10px; }
.tray { margin-left: auto; display: flex; align-items: center; color: #fff; font-family: "Open Sans", sans-serif; }
.lang { font-size: 11px; width: 26px; text-align: center; margin-top: -5px; }
.trayup { border: 4px solid transparent; border-bottom: 5px solid #fff; border-top: 0; margin-left: 10px; }
.tr1 { margin-left: 14px; }
.tr2 { margin-left: 8px; }
.tr3 { margin-left: 10px; }
.clock { width: 76px; margin-left: 9px; display: flex; flex-direction: column; align-items: center; font-size: 11.500px; line-height: 17px; }
.showdesk { width: 14px; height: 38px; background: linear-gradient(90deg, rgba(255,255,255,.08), rgba(255,255,255,.22)); border: 1px solid rgba(255,255,255,.3); }
```
